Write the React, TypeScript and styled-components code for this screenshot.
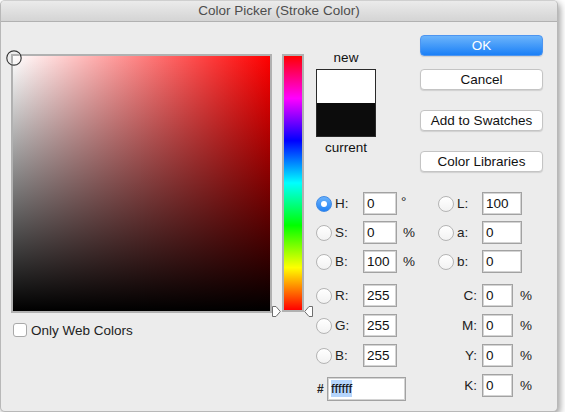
import React from "react";
import styled, { createGlobalStyle } from "styled-components";

const GlobalStyle = createGlobalStyle`
  * { box-sizing: border-box; }
  body {
    margin: 0;
    background: #fff;
    font-family: "Liberation Sans", Arial, sans-serif;
  }
`;

const Window = styled.div`
  width: 558px;
  height: 412px;
  background: #ececec;
  border: 1px solid #b8b8b8;
  border-top-color: #cfcfcf;
  border-radius: 5px;
  box-shadow: 2px 3px 7px rgba(0, 0, 0, 0.4);
  overflow: hidden;
  display: flex;
  flex-direction: column;
  font-size: 13.5px;
  color: #222;
`;

const TitleBar = styled.div`
  height: 21px;
  line-height: 20px;
  text-align: center;
  color: #4d4d4d;
  background: linear-gradient(#ebebeb, #d4d4d4);
  border-bottom: 1px solid #b1b1b1;
`;

const Body = styled.div`
  display: flex;
  align-items: flex-start;
  padding: 13px 0 0 10px;
`;

const LeftCol = styled.div`
  margin-top: 19px;
  display: flex;
  flex-direction: column;
`;

const Field = styled.div`
  position: relative;
  width: 261px;
  height: 259px;
  border: 2px solid #b1b1b1;
  background: linear-gradient(to top, #000, rgba(0, 0, 0, 0)),
    linear-gradient(to right, #fff, #f00);
`;

const Marker = styled.svg`
  position: absolute;
  left: -7px;
  top: -6px;
`;

const CheckRow = styled.label`
  display: flex;
  align-items: center;
  gap: 4px;
  margin: 10px 0 0 2px;
  height: 14px;
`;

const CheckBox = styled.span`
  width: 14px;
  height: 14px;
  background: #fff;
  border: 1px solid #a9a9a9;
  border-radius: 3px;
`;

const HueBar = styled.div`
  position: relative;
  margin: 19px 0 0 10px;
  width: 22px;
  height: 258px;
  border: 2px solid #b1b1b1;
  background: linear-gradient(
    to bottom,
    #f00 0%,
    #f0f 16.67%,
    #00f 33.33%,
    #0ff 50%,
    #0f0 66.67%,
    #ff0 83.33%,
    #f00 100%
  );
`;

const Arrow = styled.svg<{ $side: "left" | "right" }>`
  position: absolute;
  top: 250px;
  left: ${(p) => (p.$side === "left" ? "-12px" : "20px")};
`;

const RightArea = styled.div`
  margin-left: 12px;
  display: flex;
  flex-direction: column;
`;

const TopRow = styled.div`
  display: flex;
  align-items: flex-start;
`;

const SwatchCol = styled.div`
  margin-top: 15px;
  width: 60px;
  display: flex;
  flex-direction: column;
  align-items: center;
`;

const SwatchLabel = styled.div`
  line-height: 16px;
  color: #111;
`;

const Swatch = styled.div`
  width: 60px;
  height: 68px;
  margin: 3px 0;
  border: 1px solid #2a2a2a;
  display: flex;
  flex-direction: column;
`;

const SwatchHalf = styled.div<{ $color: string }>`
  flex: 1;
  background: ${(p) => p.$color};
`;

const ButtonCol = styled.div`
  margin-left: 44px;
  width: 123px;
  display: flex;
  flex-direction: column;
`;

const Button = styled.button<{ $primary?: boolean; $gap: number }>`
  height: 21px;
  margin-top: ${(p) => p.$gap}px;
  padding: 0;
  font-family: inherit;
  font-size: 13.5px;
  border-radius: 4px;
  color: ${(p) => (p.$primary ? "#fff" : "#111")};
  background: ${(p) =>
    p.$primary ? "linear-gradient(#6cb4fb, #1b80f7)" : "#fff"};
  border: 1px solid ${(p) => (p.$primary ? "#4d95f0" : "#c4c4c4")};
  box-shadow: 0 1px 1px rgba(0, 0, 0, 0.12);
`;

const FieldsRow = styled.div`
  display: grid;
  grid-template-columns: 122px auto;
  margin-top: 20px;
`;

const FieldCol = styled.div`
  display: flex;
  flex-direction: column;
`;

const Row = styled.div<{ $gap: number; $tall?: boolean }>`
  display: flex;
  align-items: center;
  height: ${(p) => (p.$tall ? 24 : 23)}px;
  margin-top: ${(p) => p.$gap}px;
`;

const Radio = styled.span<{ $on?: boolean }>`
  width: 16px;
  height: 16px;
  flex: none;
  border-radius: 50%;
  display: flex;
  align-items: center;
  justify-content: center;
  background: ${(p) =>
    p.$on ? "linear-gradient(#69b1fb, #2182f5)" : "linear-gradient(#fff, #f2f2f2)"};
  border: 1px solid ${(p) => (p.$on ? "#3f8ae6" : "#b4b4b4")};
  &::after {
    content: "";
    display: ${(p) => (p.$on ? "block" : "none")};
    width: 6px;
    height: 6px;
    border-radius: 50%;
    background: #fff;
  }
`;

const Label = styled.span<{ $width: number; $right?: boolean }>`
  width: ${(p) => p.$width}px;
  margin-left: ${(p) => (p.$right ? 0 : 3)}px;
  padding-right: ${(p) => (p.$right ? 5 : 0)}px;
  text-align: ${(p) => (p.$right ? "right" : "left")};
  flex: none;
`;

const Box = styled.div<{ $width: number }>`
  width: ${(p) => p.$width}px;
  height: 100%;
  flex: none;
  background: #fff;
  border: 1px solid #a2a2a2;
  box-shadow: inset 0 0 0 1px #d4d4d4;
  padding: 0 0 0 3px;
  line-height: 21px;
  color: #111;
`;

const Selected = styled.span`
  background: #b5d5fc;
  padding: 1px 0;
`;

const Unit = styled.span<{ $gap: number; $raised?: boolean }>`
  margin-left: ${(p) => p.$gap}px;
  align-self: ${(p) => (p.$raised ? "flex-start" : "center")};
  margin-top: ${(p) => (p.$raised ? 2 : 0)}px;
`;

const Hash = styled.span`
  width: 11px;
  font-size: 12px;
  font-weight: bold;
  margin-right: 0;
  text-align: left;
  padding-left: 1px;
`;

type Entry = { key: string; value: string; unit?: string; on?: boolean; gap: number };

const hsbRgb: Entry[] = [
  { key: "H", value: "0", unit: "°", on: true, gap: 0 },
  { key: "S", value: "0", unit: "%", gap: 6 },
  { key: "B", value: "100", unit: "%", gap: 6 },
  { key: "R", value: "255", gap: 11 },
  { key: "G", value: "255", gap: 7 },
  { key: "B", value: "255", gap: 7 },
];

const lab: Entry[] = [
  { key: "L", value: "100", gap: 0 },
  { key: "a", value: "0", gap: 6 },
  { key: "b", value: "0", gap: 6 },
];

const cmyk: Entry[] = [
  { key: "C", value: "0", gap: 11 },
  { key: "M", value: "0", gap: 7 },
  { key: "Y", value: "0", gap: 7 },
  { key: "K", value: "0", gap: 7 },
];

const ArrowIcon = ({ side }: { side: "left" | "right" }) => (
  <Arrow $side={side} width="9" height="11" viewBox="0 0 9 11">
    <path
      d={
        side === "left"
          ? "M0.5 0.5 H4 L8.3 5.5 L4 10.5 H0.5 Z"
          : "M8.5 0.5 H5 L0.7 5.5 L5 10.5 H8.5 Z"
      }
      fill="#fff"
      stroke="#6f6f6f"
      strokeWidth="1"
    />
  </Arrow>
);

const App = () => {
  return (
    <>
      <GlobalStyle />
      <Window>
        <TitleBar>Color Picker (Stroke Color)</TitleBar>
        <Body>
          <LeftCol>
            <Field>
              <Marker width="16" height="16" viewBox="0 0 16 16">
                <circle cx="8" cy="8" r="6.6" fill="none" stroke="#fff" strokeWidth="1" />
                <circle cx="8" cy="8" r="7.2" fill="none" stroke="#3a3a3a" strokeWidth="1.2" />
              </Marker>
            </Field>
            <CheckRow>
              <CheckBox />
              <span>Only Web Colors</span>
            </CheckRow>
          </LeftCol>

          <HueBar>
            <ArrowIcon side="left" />
            <ArrowIcon side="right" />
          </HueBar>

          <RightArea>
            <TopRow>
              <SwatchCol>
                <SwatchLabel>new</SwatchLabel>
                <Swatch>
                  <SwatchHalf $color="#fff" />
                  <SwatchHalf $color="#0c0c0c" />
                </Swatch>
                <SwatchLabel>current</SwatchLabel>
              </SwatchCol>
              <ButtonCol>
                <Button $primary $gap={0}>OK</Button>
                <Button $gap={13}>Cancel</Button>
                <Button $gap={20}>Add to Swatches</Button>
                <Button $gap={20}>Color Libraries</Button>
              </ButtonCol>
            </TopRow>

            <FieldsRow>
              <FieldCol>
                {hsbRgb.map((e, i) => (
                  <Row key={i} $gap={e.gap}>
                    <Radio $on={e.on} />
                    <Label $width={28}>{e.key}:</Label>
                    <Box $width={34}>{e.value}</Box>
                    {e.unit && (
                      <Unit $gap={e.unit === "°" ? 4 : 6} $raised={e.unit === "°"}>
                        {e.unit}
                      </Unit>
                    )}
                  </Row>
                ))}
                <Row $gap={10} $tall>
                  <Hash>#</Hash>
                  <Box $width={79}>
                    <Selected>ffffff</Selected>
                  </Box>
                </Row>
              </FieldCol>

              <FieldCol>
                {lab.map((e, i) => (
                  <Row key={i} $gap={e.gap}>
                    <Radio />
                    <Label $width={25}>{e.key}:</Label>
                    <Box $width={40}>{e.value}</Box>
                  </Row>
                ))}
                {cmyk.map((e, i) => (
                  <Row key={i} $gap={e.gap}>
                    <Label $width={44} $right>
                      {e.key}:
                    </Label>
                    <Box $width={31}>{e.value}</Box>
                    <Unit $gap={7}>%</Unit>
                  </Row>
                ))}
              </FieldCol>
            </FieldsRow>
          </RightArea>
        </Body>
      </Window>
    </>
  );
};

export default App;
